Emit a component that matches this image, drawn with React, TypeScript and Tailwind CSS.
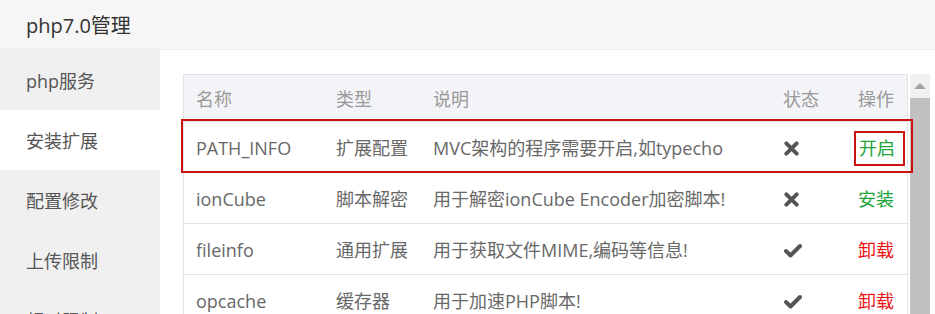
import React from "react";

const rows = [
  { name: "PATH_INFO", type: "扩展配置", desc: "MVC架构的程序需要开启,如typecho", on: false, action: "开启", color: "text-[#20a53a]" },
  { name: "ionCube", type: "脚本解密", desc: "用于解密ionCube Encoder加密脚本!", on: false, action: "安装", color: "text-[#20a53a]" },
  { name: "fileinfo", type: "通用扩展", desc: "用于获取文件MIME,编码等信息!", on: true, action: "卸载", color: "text-[#ee1111]" },
  { name: "opcache", type: "缓存器", desc: "用于加速PHP脚本!", on: true, action: "卸载", color: "text-[#ee1111]" },
];

const menu = ["php服务", "安装扩展", "配置修改", "上传限制", "超时限制"];

const Cross = () => (
  <svg width="15" height="15" viewBox="0 0 16 16" className="block">
    <path d="M2.5 2.5 L13.5 13.5 M13.5 2.5 L2.5 13.5" stroke="#555" strokeWidth="4.2" strokeLinecap="round" />
  </svg>
);

const Check = () => (
  <svg width="18" height="15" viewBox="0 0 18 15" className="block">
    <path d="M2 8 L6.5 12.5 L16 3" stroke="#555" strokeWidth="4" fill="none" strokeLinecap="round" strokeLinejoin="round" />
  </svg>
);

const cols = "grid grid-cols-[140px_97px_350px_75px_61px]";

export default function App() {
  return (
    <div className="w-[935px] h-[314px] overflow-hidden bg-white font-['Open_Sans','Noto_Sans_CJK_SC',sans-serif]">
      <div className="h-[50px] bg-[#f6f6f6] border-b border-[#ececec] flex items-center pl-[26px] pt-[2px] text-[20px] text-[#333]">
        php7.0管理
      </div>
      <div className="flex">
        <div className="w-[160px] shrink-0 bg-[#f0f0f0]">
          {menu.map((m, i) => (
            <div
              key={m}
              className={`h-[60px] flex items-center pl-[26px] pt-[2px] text-[18px] text-[#555] ${i === 1 ? "bg-white" : ""}`}
            >
              {m}
            </div>
          ))}
        </div>
        <div className="flex-1 flex pl-[23px] pt-[24px]">
          <div className="w-[725px] border-l border-r border-t border-[#e2e2e2] text-[18px] self-start">
            <div className={`${cols} h-[47px] items-center pt-[2px] bg-[#f3f4f7] text-[#999] border-b border-[#e2e2e2]`}>
              <div className="px-3">名称</div>
              <div className="px-3">类型</div>
              <div className="px-3">说明</div>
              <div className="px-3">状态</div>
              <div className="px-3">操作</div>
            </div>
            {rows.map((r, i) => (
              <div key={r.name} className={`${cols} relative h-[51px] items-center pt-[2px] text-[#686868] border-b border-[#e2e2e2]`}>
                <div className="px-3">{r.name}</div>
                <div className="px-3">{r.type}</div>
                <div className="px-3 whitespace-nowrap">{r.desc}</div>
                <div className="pl-[13px]">{r.on ? <Check /> : <Cross />}</div>
                <div className={`pl-3 ${r.color}`}>
                  {i === 0 ? (
                    <span className="inline-block border-2 border-[#cc1111] pl-[3px] pr-[8px] ml-[-4px] py-[2px] leading-[27px]">
                      {r.action}
                    </span>
                  ) : (
                    r.action
                  )}
                </div>
                {i === 0 && (
                  <div className="absolute left-[-3px] right-[-6px] top-[-3px] bottom-[-1px] border-2 border-[#cc1111] pointer-events-none" />
                )}
              </div>
            ))}
          </div>
          <div className="ml-[2px] w-[20px] h-[240px] bg-[#f1f1f1] flex flex-col items-center">
            <div className="h-[24px] flex items-center justify-center">
              <div className="w-0 h-0 border-l-[6px] border-r-[6px] border-b-[6px] border-l-transparent border-r-transparent border-b-[#a3a3a3]" />
            </div>
            <div className="w-full flex-1 bg-[#c1c1c1]" />
          </div>
        </div>
      </div>
    </div>
  );
}
